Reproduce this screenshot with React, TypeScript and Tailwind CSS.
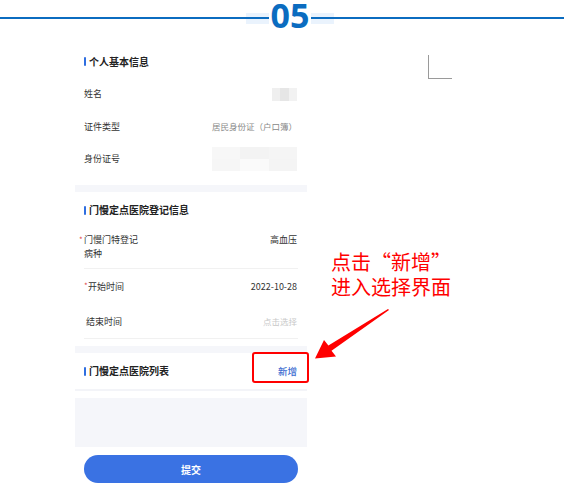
import React from "react";

const font = { fontFamily: '"Noto Sans CJK SC", "Noto Sans", sans-serif' };

function Title({ text }: { text: string }) {
  return (
    <div className="flex items-center gap-[3px] pl-[9px]">
      <span className="w-[2px] h-[9px] bg-[#2f6ee0] rounded-[1px]" />
      <span className="text-[10px] font-bold text-[#222] leading-none">{text}</span>
    </div>
  );
}

function Row({ label, children, h }: { label: string; children?: React.ReactNode; h: string }) {
  return (
    <div className={`flex items-center justify-between pl-[9px] pr-[10px] ${h}`}>
      <span className="text-[9px] text-[#333]">{label}</span>
      {children}
    </div>
  );
}

export default function App() {
  return (
    <div className="relative w-[564px] h-[499px] bg-white overflow-hidden" style={font}>
      {/* header 05 */}
      <div className="h-[45px]">
        <div className="flex items-center h-[36px]">
          <div className="w-[246px] h-[2px] bg-[#0b6cc0]" />
          <div className="flex items-center w-[88px] h-[11px] bg-[#eaf3fd]">
            <div className="flex-1 h-[2px] bg-[#0b6cc0]" />
            <span
              className="relative -top-[3px] bg-white px-[2px] text-[34px] font-bold leading-[28px] text-[#0b6cc0]"
              style={{ fontFamily: '"Noto Sans", sans-serif' }}
            >
              05
            </span>
            <div className="flex-1 h-[2px] bg-[#0b6cc0]" />
          </div>
          <div className="flex-1 h-[2px] bg-[#0b6cc0]" />
        </div>
      </div>

      <div className="ml-[75px] w-[232px] flex flex-col">
        {/* card 1 */}
        <div className="bg-white pb-[10px]">
          <div className="h-[33px] flex items-center">
            <Title text="个人基本信息" />
          </div>
          <Row label="姓名" h="h-[32px]">
            <div className="flex h-[13px]">
              <div className="w-[8px] bg-[#efefef]" />
              <div className="w-[9px] bg-[#e6e6e6]" />
              <div className="w-[8px] bg-[#f2f2f2]" />
            </div>
          </Row>
          <Row label="证件类型" h="h-[33px]">
            <span className="text-[8.5px] text-[#888]">居民身份证（户口簿）</span>
          </Row>
          <Row label="身份证号" h="h-[32px]">
            <div className="flex flex-col w-[85px] h-[24px]">
              <div className="flex flex-1">
                <div className="flex-1 bg-[#f7f7f7]" />
                <div className="flex-1 bg-[#f3f3f3]" />
                <div className="flex-1 bg-[#f5f5f5]" />
              </div>
              <div className="flex flex-1">
                <div className="flex-1 bg-[#f6f6f6]" />
                <div className="flex-1 bg-[#fafafa]" />
                <div className="flex-1 bg-[#f4f4f4]" />
              </div>
            </div>
          </Row>
        </div>
        <div className="h-[7px] bg-[#f5f6fa]" />

        {/* card 2 */}
        <div className="bg-white pb-[7px]">
          <div className="h-[36px] flex items-center">
            <Title text="门慢定点医院登记信息" />
          </div>
          <div className="flex justify-between pl-[4px] pr-[10px] pt-[5px] pb-[7px] leading-[14px]">
            <div className="flex text-[9px] text-[#333]">
              <span className="w-[5px] text-[#e04a4a] text-[8px]">*</span>
              <span>
                门慢门特登记
                <br />
                病种
              </span>
            </div>
            <span className="text-[9px] text-[#333]">高血压</span>
          </div>
          <div className="mx-[9px] h-px bg-[#f1f1f1]" />
          <div className="flex items-center justify-between pl-[9px] pr-[10px] h-[36px]">
            <div className="flex text-[9px] text-[#333]">
              <span className="w-[4px] text-[#e04a4a] text-[8px]">*</span>
              <span>开始时间</span>
            </div>
            <span className="text-[9px] text-[#333]">2022-10-28</span>
          </div>
          <div className="flex items-center justify-between pl-[11px] pr-[10px] h-[33px]">
            <span className="text-[9px] text-[#333]">结束时间</span>
            <span className="text-[8.5px] text-[#c8c8c8]">点击选择</span>
          </div>
          <div className="mx-[9px] h-px bg-[#f1f1f1]" />
        </div>
        <div className="h-[7px] bg-[#f5f6fa]" />

        {/* card 3 */}
        <div className="bg-white h-[36px] flex items-center justify-between pr-[10px]">
          <Title text="门慢定点医院列表" />
          <span className="text-[9.5px] font-medium text-[#3a6cd0]">新增</span>
        </div>
        <div className="h-[2px] bg-[#f3f4f8]" />
        <div className="h-[7px] bg-white" />
        <div className="h-[49px] bg-[#f5f6fa]" />

        <div className="pt-[8px] flex justify-center">
          <div className="w-[214px] h-[28px] rounded-full bg-[#3a72e3] flex items-center justify-center">
            <span className="text-[10px] font-bold text-white">提交</span>
          </div>
        </div>
      </div>

      {/* red box annotation */}
      <div className="absolute left-[252px] top-[352px] w-[57px] h-[31px] border-2 border-[#ff0000] rounded-[3px]" />

      {/* annotation text */}
      <div className="absolute left-[331px] top-[249px] flex flex-col text-[20px] leading-[25px] text-[#ff0000]">
        <span>点击“新增”</span>
        <span>进入选择界面</span>
      </div>

      {/* corner mark */}
      <div className="absolute left-[428px] top-[55px] w-[24px] h-[24px] border-l border-b border-[#9a9a9a]" />

      {/* arrow */}
      <svg className="absolute left-0 top-0" width="564" height="499" viewBox="0 0 564 499">
        <polygon
          points="389,310 331.5,350.8 336,356.5 315,358.5 324,340 328.4,345.6 388,309"
          fill="#ff0000"
        />
      </svg>
    </div>
  );
}
